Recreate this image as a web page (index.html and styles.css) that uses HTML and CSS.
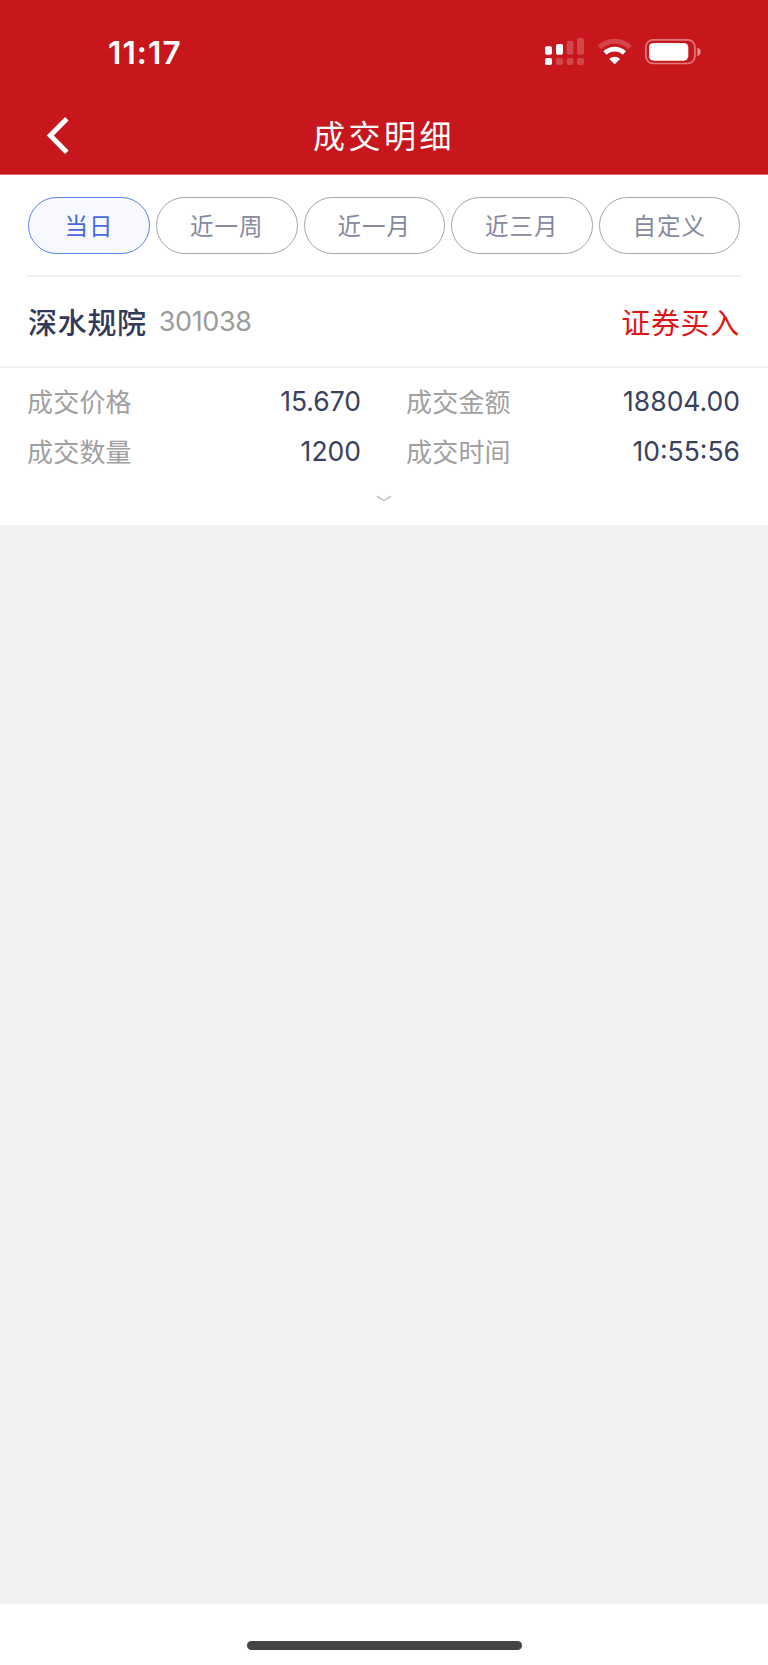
FILE: index.html
```
<!DOCTYPE html>
<html lang="zh-CN">
<head>
    <meta charset="UTF-8">
    <meta name="viewport" content="width=device-width, initial-scale=1.0">
    <title>成交明细</title>
    <link rel="stylesheet" href="styles.css">
</head>
<body>
    <header class="header">
        <div class="status-bar">
            <span class="time">11:17</span>
            <svg class="status-icons" width="158" height="30" viewBox="0 0 158 30">
                <!-- dual sim signal -->
                <g fill="#fff">
                    <rect x="1" y="9.3" width="7" height="8.4" rx="1.8"/>
                    <rect x="12" y="7" width="7" height="10.7" rx="1.8"/>
                    <rect x="1" y="21" width="7" height="7" rx="1.8"/>
                </g>
                <g fill="#fff" opacity="0.2">
                    <rect x="22.7" y="4" width="6.7" height="13.7" rx="1.8"/>
                    <rect x="33" y="1" width="7" height="16.7" rx="1.8"/>
                    <rect x="12" y="21" width="7" height="7" rx="2"/>
                    <rect x="22.7" y="21" width="6.7" height="7" rx="2"/>
                    <rect x="33" y="21" width="7" height="7" rx="2"/>
                </g>
                <!-- wifi -->
                <path d="M55.4 10.4a21.8 21.8 0 0 1 30.6 0" fill="none" stroke="#fff" stroke-width="5" opacity="0.2"/>
                <path d="M61 16a14 14 0 0 1 19.4 0" fill="none" stroke="#fff" stroke-width="4.8"/>
                <path d="M65.2 21.9a8 8 0 0 1 11 0l-5.5 5.4z" fill="#fff"/>
                <!-- battery -->
                <rect x="101.9" y="2.9" width="49" height="23.6" rx="7.2" fill="none" stroke="#fff" stroke-width="1.7" opacity="0.42"/>
                <rect x="105" y="6" width="39.3" height="17.7" rx="4.6" fill="#fff"/>
                <path d="M153.3 10.5c4.6 1.2 4.6 7.6 0 8.8z" fill="#fff" opacity="0.5"/>
            </svg>
        </div>
        <div class="nav">
            <svg class="back" width="24" height="40" viewBox="0 0 24 40">
                <path d="M20.8 3.7L4.3 20.5l16.5 16.8" fill="none" stroke="#fff" stroke-width="5"/>
            </svg>
            <h1 class="title">成交明细</h1>
        </div>
    </header>

    <main class="content">
        <div class="tabs">
            <button class="tab active">当日</button>
            <button class="tab">近一周</button>
            <button class="tab">近一月</button>
            <button class="tab">近三月</button>
            <button class="tab">自定义</button>
        </div>

        <div class="stock">
            <span class="stock-name">深水规院</span>
            <span class="stock-code">301038</span>
            <span class="stock-side">证券买入</span>
        </div>

        <div class="details">
            <div class="item"><span class="label">成交价格</span><span class="value">15.670</span></div>
            <div class="item"><span class="label">成交金额</span><span class="value">18804.00</span></div>
            <div class="item"><span class="label">成交数量</span><span class="value">1200</span></div>
            <div class="item"><span class="label">成交时间</span><span class="value">10:55:56</span></div>
        </div>

        <div class="expand">
            <svg width="16" height="8" viewBox="0 0 16 8">
                <path d="M1 1.2l7 4.3 7-4.3" fill="none" stroke="#b9bbc4" stroke-width="1.4"/>
            </svg>
        </div>
    </main>

    <footer class="home">
        <div class="home-bar"></div>
    </footer>
</body>
</html>
```
FILE: styles.css
```
* {
    box-sizing: border-box;
}
body {
    margin: 0;
    height: 1665px;
    display: flex;
    flex-direction: column;
    font-family: Inter, "Noto Sans CJK SC", sans-serif;
    background: #f1f1f1;
}
.header {
    height: 175px;
    background: #c8171c;
    border-bottom: 1px solid #e0696c;
    color: #fff;
}
.status-bar {
    height: 96px;
    padding: 37px 66px 0 108px;
    display: flex;
    justify-content: space-between;
    align-items: flex-start;
}
.time {
    font-size: 31.5px;
    font-weight: 600;
    line-height: 32px;
    letter-spacing: 1.1px;
}
.nav {
    height: 78px;
    display: grid;
    grid-template-columns: 100px 1fr 100px;
    align-items: center;
}
.back {
    margin-left: 46px;
}
.title {
    margin: 0;
    padding-top: 3px;
    font-size: 32px;
    font-weight: 400;
    line-height: 40px;
    letter-spacing: 3.5px;
    text-align: center;
}

.content {
    height: 350px;
    background: #fff;
}
.tabs {
    height: 102px;
    margin: 0 27px;
    padding: 22px 1px 0;
    display: flex;
    gap: 6px;
    border-bottom: 2px solid #efefef;
}
.tab {
    flex: 1;
    height: 57px;
    padding: 0 0 2px;
    border: 1px solid #a3a6b4;
    border-radius: 29px;
    background: #fff;
    color: #868a9d;
    font-family: inherit;
    font-size: 23.5px;
    letter-spacing: 1px;
}
.tab.active {
    flex: 0 0 122px;
    border-color: #5f80ee;
    background: #f8f9fe;
    color: #4668e4;
}
.stock {
    height: 91px;
    padding: 0 28px 1px;
    display: flex;
    align-items: center;
    border-bottom: 2px solid #f0f0f0;
    font-size: 29px;
    letter-spacing: 0.7px;
}
.stock-name {
    font-weight: 500;
    color: #333a59;
}
.stock-code {
    margin-left: 12px;
    font-size: 27px;
    letter-spacing: -0.4px;
    color: #9c9c9c;
}
.stock-side {
    margin-left: auto;
    color: #e01515;
}
.details {
    padding: 8px 28px 0;
    display: grid;
    grid-template-columns: 333px 333px;
    column-gap: 46px;
    grid-auto-rows: 50px;
}
.item {
    display: flex;
    justify-content: space-between;
    align-items: center;
}
.label {
    margin-left: -1px;
    padding-bottom: 2px;
    font-size: 26px;
    letter-spacing: 0.2px;
    color: #a0a0a0;
}
.value {
    font-size: 26.5px;
    color: #3a415f;
}
.expand {
    padding-top: 19px;
    display: flex;
    justify-content: center;
}

.home {
    height: 61px;
    margin-top: auto;
    padding-top: 37px;
    background: #fff;
}
.home-bar {
    width: 275px;
    height: 9px;
    margin: 0 auto;
    border-radius: 5px;
    background: #444;
}
```
